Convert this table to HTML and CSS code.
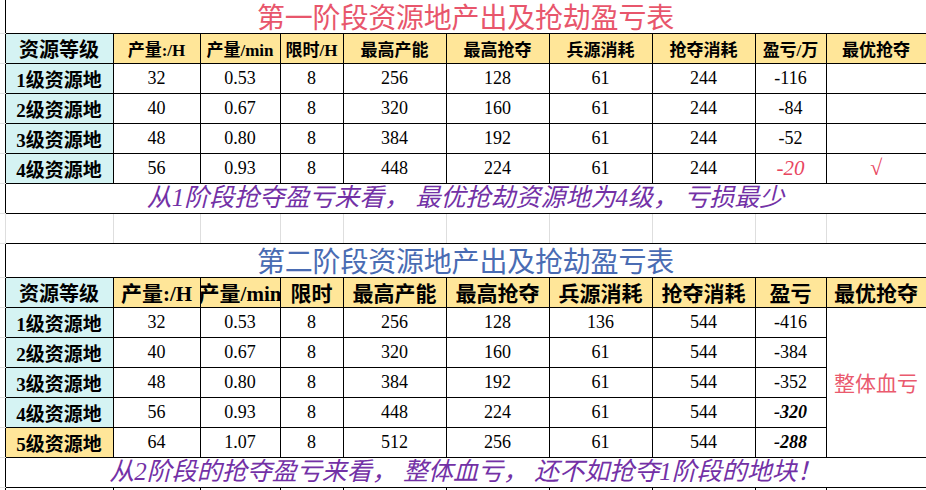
FILE: index.html
```html
<!DOCTYPE html>
<html lang="zh-CN">
<head>
<meta charset="utf-8">
<title>资源地产出及抢劫盈亏表</title>
<link rel="stylesheet" href="styles.css">
</head>
<body>
<table class="sheet">
  <colgroup>
    <col class="c-gut"><col class="c-lv"><col class="c-h"><col class="c-min"><col class="c-lim">
    <col class="c-w"><col class="c-w"><col class="c-w"><col class="c-w"><col class="c-pl"><col class="c-best">
  </colgroup>
  <tr class="r-title">
    <td class="gut"></td>
    <td colspan="10" class="title title-red">第一阶段资源地产出及抢劫盈亏表</td>
  </tr>
  <tr class="r-head">
    <td class="gut"></td>
    <td class="lv lv-head"><div class="in">资源等级</div></td>
    <td class="hd"><div class="in">产量:/H</div></td>
    <td class="hd"><div class="in">产量/min</div></td>
    <td class="hd"><div class="in">限时/H</div></td>
    <td class="hd"><div class="in">最高产能</div></td>
    <td class="hd"><div class="in">最高抢夺</div></td>
    <td class="hd"><div class="in">兵源消耗</div></td>
    <td class="hd"><div class="in">抢夺消耗</div></td>
    <td class="hd"><div class="in">盈亏/万</div></td>
    <td class="hd"><div class="in">最优抢夺</div></td>
  </tr>
  <tr class="r-data">
    <td class="gut"></td>
    <td class="lv"><div class="in">1级资源地</div></td>
    <td class="num">32</td><td class="num">0.53</td><td class="num">8</td><td class="num">256</td>
    <td class="num">128</td><td class="num">61</td><td class="num">244</td><td class="num">-116</td><td class="num"></td>
  </tr>
  <tr class="r-data">
    <td class="gut"></td>
    <td class="lv"><div class="in">2级资源地</div></td>
    <td class="num">40</td><td class="num">0.67</td><td class="num">8</td><td class="num">320</td>
    <td class="num">160</td><td class="num">61</td><td class="num">244</td><td class="num">-84</td><td class="num"></td>
  </tr>
  <tr class="r-data">
    <td class="gut"></td>
    <td class="lv"><div class="in">3级资源地</div></td>
    <td class="num">48</td><td class="num">0.80</td><td class="num">8</td><td class="num">384</td>
    <td class="num">192</td><td class="num">61</td><td class="num">244</td><td class="num">-52</td><td class="num"></td>
  </tr>
  <tr class="r-data">
    <td class="gut"></td>
    <td class="lv"><div class="in">4级资源地</div></td>
    <td class="num">56</td><td class="num">0.93</td><td class="num">8</td><td class="num">448</td>
    <td class="num">224</td><td class="num">61</td><td class="num">244</td><td class="num best-red">-20</td><td class="num check">√</td>
  </tr>
  <tr class="r-data">
    <td class="gut"></td>
    <td colspan="10" class="msg">从1阶段抢夺盈亏来看， 最优抢劫资源地为4级， 亏损最少</td>
  </tr>
  <tr class="r-data r-empty">
    <td class="gut"></td>
    <td class="e"></td><td class="e"></td><td class="e"></td><td class="e"></td><td class="e"></td>
    <td class="e"></td><td class="e"></td><td class="e"></td><td class="e"></td><td class="e e-last"></td>
  </tr>
  <tr class="r-title2">
    <td class="gut"></td>
    <td colspan="10" class="title title-blue">第二阶段资源地产出及抢劫盈亏表</td>
  </tr>
  <tr class="r-head">
    <td class="gut"></td>
    <td class="lv lv-head"><div class="in">资源等级</div></td>
    <td class="hd hd2"><div class="in">产量:/H</div></td>
    <td class="hd hd2"><div class="in">产量/min</div></td>
    <td class="hd hd2"><div class="in">限时</div></td>
    <td class="hd hd2"><div class="in">最高产能</div></td>
    <td class="hd hd2"><div class="in">最高抢夺</div></td>
    <td class="hd hd2"><div class="in">兵源消耗</div></td>
    <td class="hd hd2"><div class="in">抢夺消耗</div></td>
    <td class="hd hd2"><div class="in">盈亏</div></td>
    <td class="hd hd2"><div class="in">最优抢夺</div></td>
  </tr>
  <tr class="r-data">
    <td class="gut"></td>
    <td class="lv"><div class="in">1级资源地</div></td>
    <td class="num">32</td><td class="num">0.53</td><td class="num">8</td><td class="num">256</td>
    <td class="num">128</td><td class="num">136</td><td class="num">544</td><td class="num">-416</td>
    <td class="num verdict" rowspan="5">整体血亏</td>
  </tr>
  <tr class="r-data">
    <td class="gut"></td>
    <td class="lv"><div class="in">2级资源地</div></td>
    <td class="num">40</td><td class="num">0.67</td><td class="num">8</td><td class="num">320</td>
    <td class="num">160</td><td class="num">61</td><td class="num">544</td><td class="num">-384</td>
  </tr>
  <tr class="r-data">
    <td class="gut"></td>
    <td class="lv"><div class="in">3级资源地</div></td>
    <td class="num">48</td><td class="num">0.80</td><td class="num">8</td><td class="num">384</td>
    <td class="num">192</td><td class="num">61</td><td class="num">544</td><td class="num">-352</td>
  </tr>
  <tr class="r-data">
    <td class="gut"></td>
    <td class="lv"><div class="in">4级资源地</div></td>
    <td class="num">56</td><td class="num">0.93</td><td class="num">8</td><td class="num">448</td>
    <td class="num">224</td><td class="num">61</td><td class="num">544</td><td class="num best-bold">-320</td>
  </tr>
  <tr class="r-data">
    <td class="gut"></td>
    <td class="lv lv-gold"><div class="in">5级资源地</div></td>
    <td class="num">64</td><td class="num">1.07</td><td class="num">8</td><td class="num">512</td>
    <td class="num">256</td><td class="num">61</td><td class="num">544</td><td class="num best-bold">-288</td>
  </tr>
  <tr class="r-data">
    <td class="gut"></td>
    <td colspan="10" class="msg">从2阶段的抢夺盈亏来看， 整体血亏， 还不如抢夺1阶段的地块！</td>
  </tr>
  <tr class="r-data">
    <td class="gut"></td>
    <td class="num"></td><td class="num"></td><td class="num"></td><td class="num"></td><td class="num"></td>
    <td class="num"></td><td class="num"></td><td class="num"></td><td class="num"></td><td class="num"></td>
  </tr>
</table>
</body>
</html>
```

FILE: styles.css
```css
html, body {
  margin: 0;
  padding: 0;
  background: #ffffff;
  overflow: hidden;
}

.sheet {
  border-collapse: collapse;
  table-layout: fixed;
  width: 926px;
  font-family: "Liberation Serif", "Noto Sans CJK SC", serif;
  color: #000;
}

.c-gut { width: 5px; }
.c-lv { width: 108px; }
.c-h { width: 87px; }
.c-min { width: 80px; }
.c-lim { width: 63px; }
.c-w { width: 103px; }
.c-pl { width: 71px; }
.c-best { width: 100px; }

.sheet td {
  padding: 0;
  border: 1px solid #000;
  text-align: center;
  vertical-align: middle;
  white-space: nowrap;
  overflow: hidden;
}

.sheet td.gut {
  border: none;
  border-bottom: 1px solid #e2e2e2;
}

.r-title { height: 33px; }
.r-title2 { height: 34px; }
.r-head { height: 30px; }
.r-data { height: 30px; }

.sheet td.title {
  font-family: "Noto Sans CJK SC", sans-serif;
  font-size: 28px;
  line-height: 32px;
  letter-spacing: -0.2px;
  overflow: visible;
}
.r-title .title { border-top: none; }
.title-red { color: #e8566c; }
.title-blue { color: #4a6cb3; }

.in {
  display: flex;
  justify-content: center;
  align-items: center;
  height: 28px;
  overflow: hidden;
  white-space: nowrap;
}

.lv {
  background: #d5f3f3;
  font-weight: 700;
  font-size: 19px;
}
.lv-head { font-size: 20px; }
.lv-gold { background: #ffe699; }

.hd {
  background: #ffe699;
  font-weight: 700;
  font-size: 17px;
}
.hd2 { font-size: 21px; }

.num {
  font-size: 18px;
}

.best-red {
  color: #e8465f;
  font-style: italic;
  font-size: 21px;
}
.best-bold {
  font-style: italic;
  font-weight: 700;
}
.check {
  color: #e8465f;
  font-size: 22px;
  font-weight: 700;
  font-style: italic;
}
.verdict {
  color: #ea5a6e;
  font-family: "Noto Sans CJK SC", sans-serif;
  font-size: 21px;
  vertical-align: middle;
}

.sheet td.msg {
  font-family: "Liberation Serif", "Noto Sans CJK SC", serif;
  font-style: italic;
  font-size: 25px;
  color: #7331a6;
  line-height: 28px;
  overflow: visible;
}

.r-empty td.e {
  border-top: 1px solid #000;
  border-bottom: 1px solid #000;
  border-left: 1px solid #dedede;
  border-right: 1px solid #dedede;
}
.r-empty td.e:first-of-type { border-left: 1px solid #000; }
.r-empty td.e-last { border-right: 1px solid #000; }
```
